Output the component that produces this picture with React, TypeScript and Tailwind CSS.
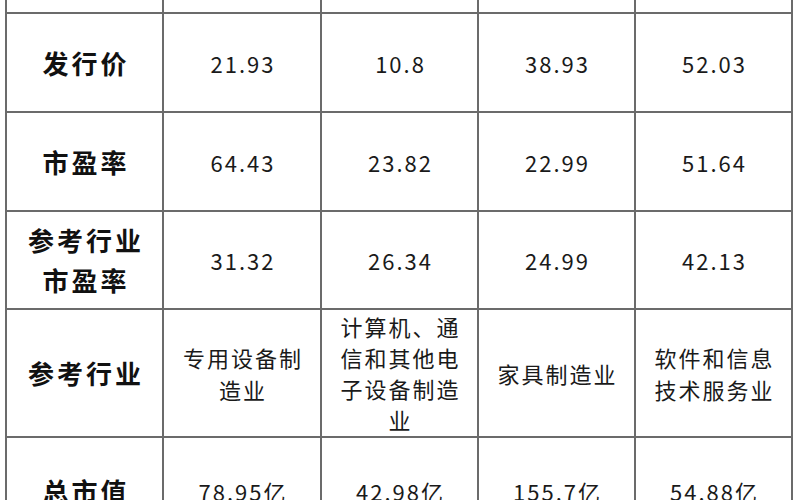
import React from "react";

const font = { fontFamily: '"Noto Sans CJK SC", "Noto Sans", sans-serif' };

type Row = { h: string; head: React.ReactNode; cells: React.ReactNode[]; lh?: string };

const rows: Row[] = [
  { h: "h-[12px]", head: "", cells: ["", "", "", ""] },
  { h: "h-[97px]", head: "发行价", cells: ["21.93", "10.8", "38.93", "52.03"] },
  { h: "h-[97px]", head: "市盈率", cells: ["64.43", "23.82", "22.99", "51.64"] },
  {
    h: "h-[96px]",
    head: (
      <>
        参考行业
        <br />
        市盈率
      </>
    ),
    cells: ["31.32", "26.34", "24.99", "42.13"],
  },
  {
    h: "h-[126px]",
    head: "参考行业",
    cells: [
      <span className="leading-[32px]">
        专用设备制
        <br />
        造业
      </span>,
      <span className="leading-[31px]">
        计算机、通
        <br />
        信和其他电
        <br />
        子设备制造
        <br />
        业
      </span>,
      <span>家具制造业</span>,
      <span className="leading-[32px]">
        软件和信息
        <br />
        技术服务业
      </span>,
    ],
  },
  { h: "h-[106px]", head: "总市值", cells: ["78.95亿", "42.98亿", "155.7亿", "54.88亿"] },
];

export default function App() {
  return (
    <div className="w-[800px] h-[500px] overflow-hidden bg-white" style={font}>
      <div className="ml-[5px] w-[788px] bg-[#6b6b6b] px-[2px] grid grid-cols-[155px_156px_155px_155px_155px] gap-[2px]">
        {rows.map((r, i) => (
          <React.Fragment key={i}>
            <div
              className={`${r.h} bg-white flex items-center justify-center text-center text-[26px] font-bold text-[#111] tracking-[3px] leading-[40px] pl-[3px]`}
            >
              {r.head}
            </div>
            {r.cells.map((c, j) => (
              <div
                key={j}
                className={`${r.h} bg-white flex items-center justify-center text-center text-[22px] text-[#1a1a1a] tracking-[2px] pl-[2px] leading-[32px]`}
              >
                {c}
              </div>
            ))}
          </React.Fragment>
        ))}
      </div>
    </div>
  );
}
